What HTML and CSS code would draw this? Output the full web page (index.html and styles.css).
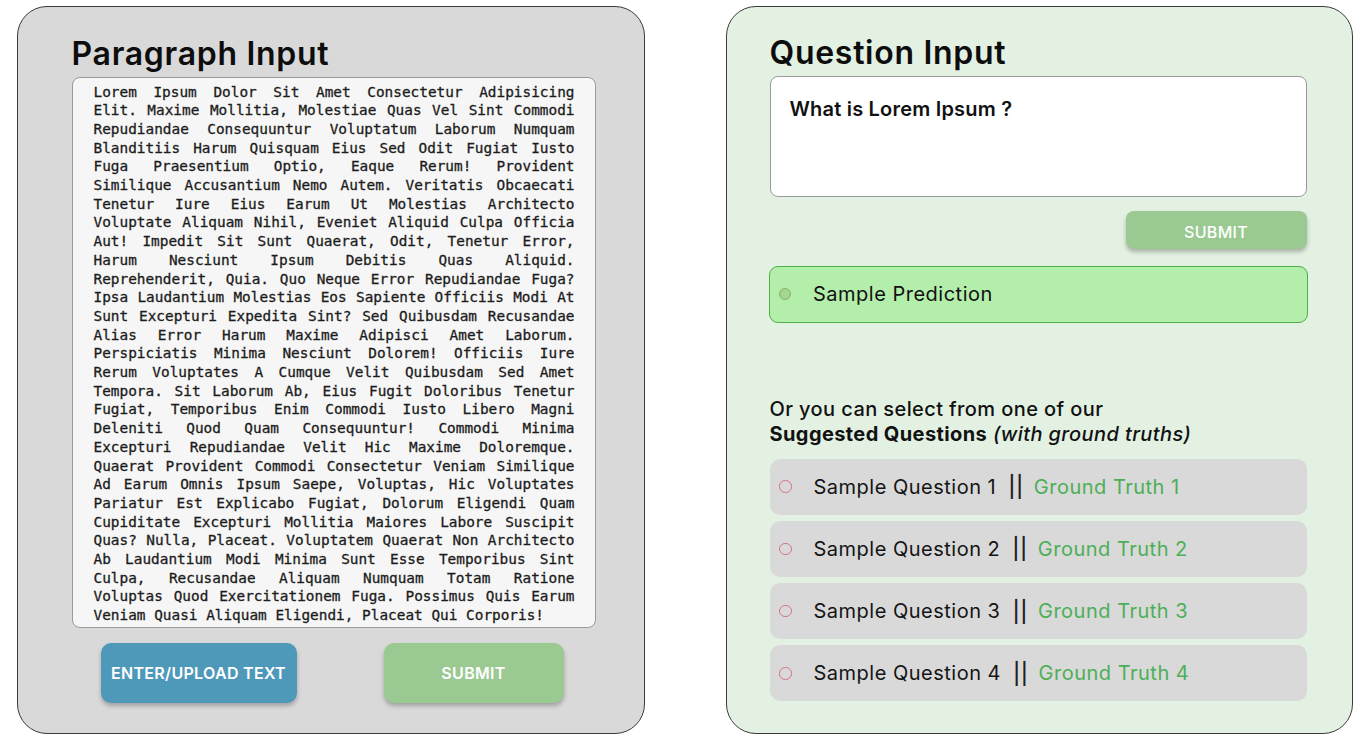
FILE: index.html
```html
<!DOCTYPE html>
<html lang="en">
<head>
<meta charset="utf-8">
<title>QA Demo</title>
<link rel="stylesheet" href="styles.css">
</head>
<body>
<main class="layout">
  <section class="panel panel-para">
    <h1 class="panel-title">Paragraph Input</h1>
    <div class="para-box">
      <p class="para-text">Lorem Ipsum Dolor Sit Amet Consectetur Adipisicing Elit. Maxime Mollitia, Molestiae Quas Vel Sint Commodi Repudiandae Consequuntur Voluptatum Laborum Numquam Blanditiis Harum Quisquam Eius Sed Odit Fugiat Iusto Fuga Praesentium Optio, Eaque Rerum! Provident Similique Accusantium Nemo Autem. Veritatis Obcaecati Tenetur Iure Eius Earum Ut Molestias Architecto Voluptate Aliquam Nihil, Eveniet Aliquid Culpa Officia Aut! Impedit Sit Sunt Quaerat, Odit, Tenetur Error, Harum Nesciunt Ipsum Debitis Quas Aliquid. Reprehenderit, Quia. Quo Neque Error Repudiandae Fuga? Ipsa Laudantium Molestias Eos Sapiente Officiis Modi At Sunt Excepturi Expedita Sint? Sed Quibusdam Recusandae Alias Error Harum Maxime Adipisci Amet Laborum. Perspiciatis Minima Nesciunt Dolorem! Officiis Iure Rerum Voluptates A Cumque Velit Quibusdam Sed Amet Tempora. Sit Laborum Ab, Eius Fugit Doloribus Tenetur Fugiat, Temporibus Enim Commodi Iusto Libero Magni Deleniti Quod Quam Consequuntur! Commodi Minima Excepturi Repudiandae Velit Hic Maxime Doloremque. Quaerat Provident Commodi Consectetur Veniam Similique Ad Earum Omnis Ipsum Saepe, Voluptas, Hic Voluptates Pariatur Est Explicabo Fugiat, Dolorum Eligendi Quam Cupiditate Excepturi Mollitia Maiores Labore Suscipit Quas? Nulla, Placeat. Voluptatem Quaerat Non Architecto Ab Laudantium Modi Minima Sunt Esse Temporibus Sint Culpa, Recusandae Aliquam Numquam Totam Ratione Voluptas Quod Exercitationem Fuga. Possimus Quis Earum Veniam Quasi Aliquam Eligendi, Placeat Qui Corporis!</p>
    </div>
    <div class="para-actions">
      <button class="btn btn-blue btn-upload">ENTER/UPLOAD TEXT</button>
      <button class="btn btn-green btn-para-submit">SUBMIT</button>
    </div>
  </section>

  <section class="panel panel-question">
    <h1 class="panel-title">Question Input</h1>
    <div class="question-box">What is Lorem Ipsum ?</div>
    <div class="question-actions">
      <button class="btn btn-green btn-q-submit">SUBMIT</button>
    </div>
    <div class="prediction">
      <span class="dot"></span>
      <span class="prediction-text">Sample Prediction</span>
    </div>
    <p class="suggest-heading">Or you can select from one of our<br><strong>Suggested Questions</strong> <em>(with ground truths)</em></p>
    <ul class="suggest-list">
      <li class="suggest-item"><span class="ring"></span><span class="q">Sample Question 1</span><span class="sep">||</span><span class="gt">Ground Truth 1</span></li>
      <li class="suggest-item"><span class="ring"></span><span class="q">Sample Question 2</span><span class="sep">||</span><span class="gt">Ground Truth 2</span></li>
      <li class="suggest-item"><span class="ring"></span><span class="q">Sample Question 3</span><span class="sep">||</span><span class="gt">Ground Truth 3</span></li>
      <li class="suggest-item"><span class="ring"></span><span class="q">Sample Question 4</span><span class="sep">||</span><span class="gt">Ground Truth 4</span></li>
    </ul>
  </section>
</main>
</body>
</html>
```

FILE: styles.css
```css
* { box-sizing: border-box; }

html, body {
  margin: 0;
  padding: 0;
  background: #ffffff;
  font-family: Inter, "Noto Sans", "Liberation Sans", sans-serif;
  color: #111;
}

.layout {
  display: flex;
  gap: 81px;
  padding: 6px 0 0 17px;
}

.panel {
  height: 728px;
  border: 1.5px solid #3a3a3a;
  border-radius: 30px;
  display: flex;
  flex-direction: column;
}

.panel-para {
  width: 628px;
  background: #d9d9d9;
  padding: 27.5px 0 0 53.5px;
}

.panel-question {
  width: 627px;
  background: #e3f1e3;
  padding: 26.5px 0 0 42.5px;
}

.panel-title {
  margin: 0;
  font-size: 32px;
  line-height: 37px;
  font-weight: 600;
  color: #0d0d0d;
  letter-spacing: 0.7px;
}

/* Paragraph box */
.para-box {
  margin-top: 5px;
  width: 524px;
  height: 551px;
  background: #f6f6f6;
  border: 1px solid #9a9a9a;
  border-radius: 8px;
  padding: 5px 20px 0 21px;
  overflow: hidden;
}

.para-text {
  margin: 0;
  width: 481px;
  font-family: "DejaVu Sans Mono", "Liberation Mono", monospace;
  font-size: 14.4px;
  line-height: 18.7px;
  text-align: justify;
  color: #1c1c1c;
  -webkit-text-stroke: 0.3px #1c1c1c;
}

.para-actions {
  display: flex;
  gap: 87px;
  margin-top: 15px;
  padding-left: 29px;
}

.btn {
  border: none;
  color: #ffffff;
  font-family: Inter, "Noto Sans", sans-serif;
  font-size: 16px;
  font-weight: 600;
  letter-spacing: 0.3px;
  border-radius: 10px;
  box-shadow: 0 3px 4px rgba(0, 0, 0, 0.25);
  cursor: pointer;
  padding: 0;
}

.btn-blue { background: #4e99ba; }
.btn-green { background: #9aca92; }

.btn-upload { width: 196px; height: 60px; }
.btn-para-submit { width: 180px; height: 60px; }

/* Question side */
.question-box {
  margin-top: 5px;
  width: 537px;
  height: 121px;
  background: #ffffff;
  border: 1px solid #9a9a9a;
  border-radius: 8px;
  padding: 20px 19px;
  font-size: 20px;
  font-weight: 600;
  letter-spacing: 0.2px;
  color: #111;
}

.question-actions {
  width: 537px;
  display: flex;
  justify-content: flex-end;
  margin-top: 14px;
}

.btn-q-submit {
  width: 181px;
  height: 38px;
  font-weight: 500;
  border-radius: 8px;
  padding-top: 5px;
}

.prediction {
  margin: 17px 0 0 -1px;
  width: 539px;
  height: 57px;
  background: #b3eeab;
  border: 1px solid #4fae45;
  border-radius: 9px;
  display: flex;
  align-items: center;
  padding-left: 9.5px;
  gap: 22px;
}

.dot {
  width: 12px;
  height: 12px;
  border-radius: 50%;
  background: #a6d592;
  border: 1px solid #7db56d;
  flex: none;
}

.prediction-text {
  font-size: 20px;
  font-weight: 400;
  letter-spacing: 0.5px;
  color: #111;
}

.suggest-heading {
  margin: 74px 0 0 0;
  font-size: 20px;
  line-height: 25px;
  font-weight: 500;
  letter-spacing: 0.4px;
  color: #111;
}

.suggest-heading strong { font-weight: 700; }
.suggest-heading em { font-style: italic; font-weight: 500; }

.suggest-list {
  list-style: none;
  margin: 12px 0 0 0;
  padding: 0;
  width: 537px;
  display: flex;
  flex-direction: column;
  gap: 6.3px;
}

.suggest-item {
  height: 56px;
  background: #d9d9d9;
  border-radius: 10px;
  display: flex;
  align-items: center;
  padding-left: 9.5px;
  font-size: 20px;
  letter-spacing: 0.5px;
}

.ring {
  width: 12.5px;
  height: 12.5px;
  border-radius: 50%;
  border: 1.6px solid #d6758a;
  flex: none;
  margin-right: 22px;
}

.q { color: #141414; }

.sep {
  margin: 0 10px 0 12px;
  color: #222;
  font-size: 21px;
  font-weight: 500;
  letter-spacing: 0.5px;
}

.gt { color: #4caf57; }
```
